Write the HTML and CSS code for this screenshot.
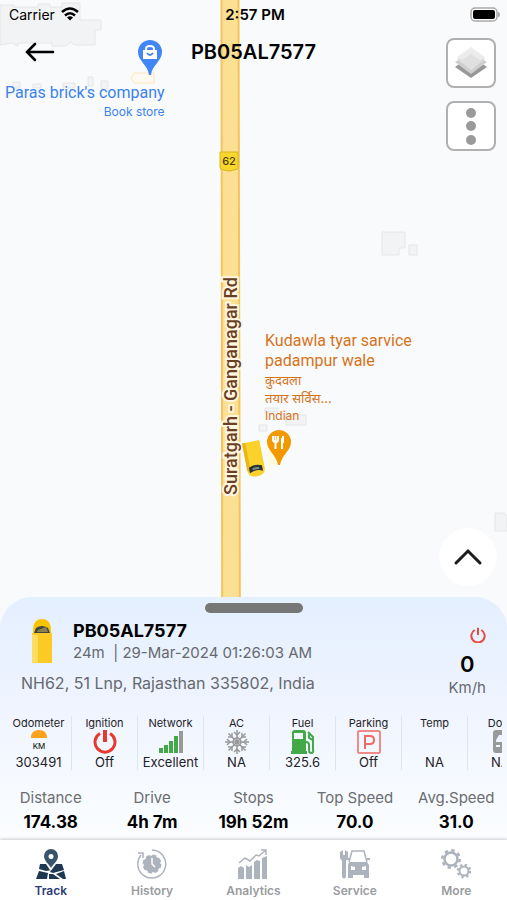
FILE: index.html
```html
<!DOCTYPE html>
<html lang="en">
	<head>
		<meta charset="utf-8">
		<meta name="viewport" content="width=device-width, initial-scale=1">
		<title>PB05AL7577</title>
		<link rel="stylesheet" href="styles.css">
	</head>
	<body>
		<div class="screen">
			<main class="map">
				<svg class="map-canvas" aria-hidden="true">
					<g class="building">
						<path d="M0 5H14V7H38V4H50V7H62V3H80V20H101V30H95V45H75L70 42L66 46H52V43H18V46L12 43L0 45Z"/>
						<path d="M382 232H405V248H399V255H382Z"/>
						<path d="M409 245H417V255H409Z"/>
						<path d="M495 513H504L507 516V531H495Z"/>
						<path d="M259 425H267V431H259Z"/>
						<path d="M286 415H306V425H286Z"/>
						<path d="M265 408H278V412H265Z"/>
						<path d="M13 82H20V88H13ZM33 84H41V88H33ZM63 83H75V88H63ZM88 77H93V86H88ZM101 81H108V89H101Z"/>
					</g>
					<path class="shop" d="M134 73H154V83H135L131 79Z"/>
					<path class="shop-plot" d="M268 450H277V466H268Z"/>
					<path class="road" d="M221.500 -5H238.500L240.500 900H222.500Z"/>
					<g class="shield">
						<path d="M220 152H238V167Q238 170 234 170L229 171L224 170Q220 170 220 167Z"/>
						<text x="229" y="165">62</text>
					</g>
					<text class="road-name" x="-386" y="237" transform="rotate(-90)">Suratgarh - Ganganagar Rd</text>
					<g transform="translate(254 459) rotate(-11) scale(1.1)">
						<path fill="#fbd22b" d="M-8 -16H8V9Q8 16 0 16Q-8 16 -8 9Z"/>
						<path fill="#e9b51a" d="M-8 -16H-5V12L-8 9Z"/>
						<path fill="#29353a" d="M-6 7Q0 4 6 7V12Q0 9 -6 12Z"/>
						<path fill="#7d8a80" d="M-3 8Q0 7 3 8V10Q0 9 -3 10Z"/>
					</g>
				</svg>
				<a class="place place-store" href="#store">
					<svg width="26" height="38" viewBox="0 0 26 38" aria-hidden="true">
						<path fill="#4285f4" d="M13 1A12 12 0 0 1 25 13C25 22 15 26 14 36H12C11 26 1 22 1 13A12 12 0 0 1 13 1Z"/>
						<path fill="#fff" d="M6 11H20V20H6Z"/>
						<path fill="none" stroke="#fff" stroke-width="2" d="M9 12V10Q9 7 13 7Q17 7 17 10V12"/>
						<path fill="none" stroke="#4285f4" stroke-width="2" d="M10 14Q13 18 16 14"/>
					</svg>
					<span class="place-name">Paras brick's company</span>
					<span class="place-kind">Book store</span>
				</a>
				<a class="place place-food" href="#food">
					<span class="place-name">Kudawla tyar sarvice<br>padampur wale</span>
					<span class="place-local" lang="hi">कुदवला<br>तयार सर्विस…</span>
					<span class="place-kind">Indian</span>
					<svg width="28" height="38" viewBox="0 0 28 38" aria-hidden="true">
						<path fill="#f29900" d="M14 1A12 12 0 0 1 26 13C26 22 17 25 15 36H13C11 25 2 22 2 13A12 12 0 0 1 14 1Z"/>
						<path fill="none" stroke="#fff" stroke-width="2" d="M8 7V11Q8 13 11 13Q13 13 13 11V7M10.500 7V20M17 20V9M18 7V14"/>
					</svg>
				</a>
				<div class="status">
					<span class="carrier">Carrier
						<svg width="18" height="14" viewBox="0 0 18 14" aria-hidden="true">
							<path fill="none" stroke="#000" stroke-width="2.600" d="M1 5Q9 -2 17 5M4 8.500Q9 4 14 8.500"/>
							<path d="M6 10.500Q9 8 12 10.500L9 13.500Z"/>
						</svg>
					</span>
					<time>2:57 PM</time>
					<svg width="31" height="15" viewBox="0 0 31 15" aria-hidden="true">
						<rect x="1" y="1" width="26" height="13" rx="4" fill="#fff" stroke="#a9a9a9" stroke-width="1.500"/>
						<rect x="3" y="3" width="22" height="9" rx="2"/>
						<path fill="#a9a9a9" d="M28 5Q30 5 30 7.500Q30 10 28 10Z"/>
					</svg>
				</div>
				<header class="topbar">
					<button class="back" type="button" aria-label="Back">
						<svg width="30" height="20" viewBox="0 0 30 20" fill="none" stroke="#000" stroke-width="2.600" stroke-linecap="round">
							<path d="M28 10H2M10 2L2 10L10 18"/>
						</svg>
					</button>
					<h1>PB05AL7577</h1>
					<div class="tools">
						<button class="tool" type="button" aria-label="Map layers">
							<svg width="34" height="34" viewBox="0 0 34 34">
								<path fill="#989898" d="M1 21L17 10L33 21L17 32Z"/>
								<path fill="#cfcfcf" d="M1 16L17 6L33 16L17 28Z"/>
								<path fill="#e0e0e0" d="M3 13L17 4L31 13L17 24Z"/>
								<path fill="#ececec" d="M3 11L17 1L31 11L26 14L17 8L8 14Z"/>
							</svg>
						</button>
						<button class="tool" type="button" aria-label="Options">
							<svg width="12" height="38" viewBox="0 0 12 38" fill="#9a9a9a">
								<circle cx="6" cy="6" r="5"/><circle cx="6" cy="19" r="5"/><circle cx="6" cy="33" r="5"/>
							</svg>
						</button>
					</div>
				</header>
				<button class="expand" type="button" aria-label="Expand">
					<svg width="30" height="18" viewBox="0 0 30 18" fill="none" stroke="#1c1c1c" stroke-width="3" stroke-linecap="round">
						<path d="M3 15L15 3L27 15"/>
					</svg>
				</button>
			</main>

			<section class="sheet">
				<div class="handle"></div>
				<div class="vehicle">
					<div class="vehicle-info">
						<div class="vehicle-head">
							<svg width="20" height="44" viewBox="0 0 20 44" aria-hidden="true">
								<path fill="#f8c400" d="M1 12Q1 0 10 0Q19 0 19 12Z"/>
								<path fill="#fbcb23" d="M0 16L1 12H19L20 16V44H0Z"/>
								<path fill="#ffdd61" d="M0 16H6V44H0Z"/>
								<path fill="#3f4542" d="M4 9Q10 5 16 9L18 14H2Z"/>
								<path fill="#8a8350" d="M6 11L14 8L16 13H5Z"/>
							</svg>
							<div>
								<h2>PB05AL7577</h2>
								<p class="seen">24m &nbsp;| 29-Mar-2024 01:26:03 AM</p>
							</div>
						</div>
						<p class="address">NH62, 51 Lnp, Rajasthan 335802, India</p>
					</div>
					<div class="speed">
						<svg width="16" height="16" viewBox="0 0 24 24" fill="none" stroke="#e94b40" stroke-width="3" aria-hidden="true">
							<path d="M7 4.500A10 10 0 1 0 17 4.500M12 1V12"/>
						</svg>
						<strong>0</strong>
						<span>Km/h</span>
					</div>
				</div>

				<ul class="sensors">
					<li>
						<span>Odometer</span>
						<svg width="24" height="24" viewBox="0 0 24 24" aria-hidden="true">
							<path fill="#faa21b" d="M4 8Q4 0 12 0Q20 0 20 8Z"/>
							<text class="km" x="12" y="19">KM</text>
						</svg>
						<b>303491</b>
					</li>
					<li>
						<span>Ignition</span>
						<svg width="24" height="24" viewBox="0 0 24 24" fill="none" stroke="#e8392f" stroke-width="3" aria-hidden="true">
							<path d="M7 3.500A10 10 0 1 0 17 3.500"/><path stroke-width="4" d="M12 0V12"/>
						</svg>
						<b>Off</b>
					</li>
					<li>
						<span>Network</span>
						<svg width="26" height="24" viewBox="0 0 26 24" fill="#43a948" aria-hidden="true">
							<path d="M1 18H5V23H1ZM6 15H10V23H6ZM11 11H15V23H11ZM16 6H20V23H16Z"/>
							<path fill="#999" d="M21 1H25V23H21Z"/>
						</svg>
						<b>Excellent</b>
					</li>
					<li>
						<span>AC</span>
						<svg width="24" height="24" viewBox="0 0 24 24" fill="none" stroke="#999" stroke-width="1.500" aria-hidden="true">
							<circle cx="12" cy="12" r="4"/>
							<path d="M12 0V24M0 12H24M3.500 3.500L20.500 20.500M20.500 3.500L3.500 20.500"/>
							<path d="M9 2L12 5L15 2M9 22L12 19L15 22M2 9L5 12L2 15M22 9L19 12L22 15M7 3V7H3M17 3V7H21M7 21V17H3M17 21V17H21"/>
						</svg>
						<b>NA</b>
					</li>
					<li>
						<span>Fuel</span>
						<svg width="24" height="24" viewBox="0 0 24 24" aria-hidden="true">
							<path fill="#43a948" fill-rule="evenodd" d="M1 21V3Q1 0 4 0H12Q15 0 15 3V21H16V24H0V21ZM3 3V9H12V3Z"/>
							<path fill="none" stroke="#43a948" stroke-width="2" d="M15 12Q18 12 18 15V20Q18 23 20 23Q23 23 22 19V7L17 2M18 4V8L22 10"/>
						</svg>
						<b>325.6</b>
					</li>
					<li>
						<span>Parking</span>
						<svg width="24" height="24" viewBox="0 0 24 24" fill="none" stroke="#ef6a60" aria-hidden="true">
							<rect x="1" y="1" width="22" height="22" rx="1" stroke-width="1.500"/>
							<path stroke-width="2" d="M8 19V6H13Q17 6 17 10Q17 14 13 14H8"/>
						</svg>
						<b>Off</b>
					</li>
					<li>
						<span>Temp</span>
						<svg width="24" height="24" aria-hidden="true"></svg>
						<b>NA</b>
					</li>
					<li>
						<span>Door</span>
						<svg width="16" height="24" viewBox="0 0 16 24" aria-hidden="true">
							<rect y="0" width="16" height="23" rx="3" fill="#999"/>
							<path fill="#eef4ff" d="M3 10L6 5H14V12H3ZM3 15H7V17H3Z"/>
						</svg>
						<b>NA</b>
					</li>
				</ul>

				<dl class="stats">
					<div><dt>Distance</dt><dd>174.38</dd></div>
					<div><dt>Drive</dt><dd>4h 7m</dd></div>
					<div><dt>Stops</dt><dd>19h 52m</dd></div>
					<div><dt>Top Speed</dt><dd>70.0</dd></div>
					<div><dt>Avg.Speed</dt><dd>31.0</dd></div>
				</dl>
			</section>

			<nav class="tabs">
				<a class="tab active" href="#track">
					<svg width="30" height="30" viewBox="0 0 30 30" fill="#1d3850" aria-hidden="true">
						<path fill="#38546a" fill-rule="evenodd" d="M15 0A7 7 0 0 1 22 7C22 12 17 15 15 19C13 15 8 12 8 7A7 7 0 0 1 15 0ZM15 5A2 2 0 0 0 15 10A2 2 0 0 0 15 5Z"/>
						<path d="M4 15H10L14 21H16L10 22L3 20ZM3 22L12 24L11 30H0ZM20 15H26L28 21L17 24L14 23ZM13 25L17 25L24 30H13ZM20 25L28 22L30 30H27Z"/>
					</svg>
					Track
				</a>
				<a class="tab" href="#history">
					<svg width="30" height="30" viewBox="0 0 30 30" fill="none" stroke="#adb3bd" aria-hidden="true">
						<path stroke-width="1.500" d="M15 1A14 14 0 1 1 4 6M1 4H6V9"/>
						<circle cx="15" cy="15" r="8" fill="#adb3bd"/>
						<circle cx="15" cy="15" r="8" stroke-width="3" stroke-dasharray="4 2.280"/>
						<path stroke="#fff" stroke-width="1.500" d="M15 9V15L18 18"/>
					</svg>
					History
				</a>
				<a class="tab" href="#analytics">
					<svg width="30" height="30" viewBox="0 0 30 30" fill="#adb3bd" aria-hidden="true">
						<path d="M0 19L3 17L6 19V30H0ZM8 16L11 18L14 16V30H8ZM16 13L19 11L22 12V30H16ZM24 9L29 7V30H24Z"/>
						<path fill="none" stroke="#adb3bd" stroke-width="1.500" d="M1 14L7 9L12 12L18 6L21 7L28 1M23 1H28V6"/>
					</svg>
					Analytics
				</a>
				<a class="tab" href="#service">
					<svg width="30" height="30" viewBox="0 0 30 30" fill="#adb3bd" aria-hidden="true">
						<path d="M0 3L3 1V6H5V1L8 3V9L6 12V28Q4 31 2 28V12L0 9Z"/>
						<path fill="none" stroke="#adb3bd" stroke-width="1.500" d="M9 13L12 2H24L27 13"/>
						<path fill-rule="evenodd" d="M9 13H27L29 16V29H24V26H13V29H8V16ZM11 17V21H15V18ZM26 17V21H22V18Z"/>
						<path d="M7 9H10V11H7ZM27 9H30V11H27Z"/>
					</svg>
					Service
				</a>
				<a class="tab" href="#more">
					<svg width="30" height="30" viewBox="0 0 30 30" fill="none" stroke="#adb3bd" aria-hidden="true">
						<circle cx="10" cy="10" r="6.500" stroke-width="2.500"/>
						<circle cx="10" cy="10" r="8.700" stroke-width="2.600" stroke-dasharray="3.400 3.430"/>
						<circle cx="23" cy="22" r="4.500" stroke-width="2"/>
						<circle cx="23" cy="22" r="6.200" stroke-width="2.200" stroke-dasharray="2.400 2.470"/>
					</svg>
					More
				</a>
			</nav>
		</div>
	</body>
</html>
```
FILE: styles.css
```css
*
{
	box-sizing: border-box;
}
body
{
	margin: 0;
	font-family: Inter, "Noto Sans", sans-serif;
	color: #000;
}
h1, h2, p, ul, dl, dd
{
	margin: 0;
	padding: 0;
}
button
{
	padding: 0;
	border: 0;
	background: none;
	cursor: pointer;
}
svg
{
	display: block;
	flex: none;
}
.screen
{
	display: flex;
	flex-direction: column;
	min-height: 100vh;
}

/* map */
.map
{
	position: relative;
	display: flex;
	flex: 1;
	flex-direction: column;
	min-height: 500px;
	margin-bottom: -32px;
	padding-bottom: 43px;
	background-color: #f9fafc;
	overflow: hidden;
}
.map-canvas
{
	position: absolute;
	inset: 0;
	width: 100%;
	height: 100%;
}
.building
{
	fill: #f2f3f4;
	stroke: #e4e6e8;
}
.shop
{
	fill: #fffaf0;
	stroke: #fbe6bb;
}
.shop-plot
{
	fill: #fffbe0;
}
.road
{
	fill: #fbe094;
	stroke: #f6c35a;
	stroke-width: 2px;
}
.shield path
{
	fill: #f9d62c;
	stroke: #d9b51c;
}
.shield text
{
	font-size: 11px;
	font-weight: 500;
	fill: #4c3d07;
	text-anchor: middle;
}
.road-name
{
	font-family: Roboto, sans-serif;
	font-size: 18px;
	font-weight: 500;
	fill: #6a3f24;
	stroke: #fff6e0;
	stroke-width: 4px;
	paint-order: stroke;
	text-anchor: middle;
}
.place
{
	position: absolute;
	display: flex;
	flex-direction: column;
	text-decoration: none;
}
.place-name
{
	font-family: Roboto, sans-serif;
	font-size: 16px;
	line-height: 20px;
}
.place-kind
{
	font-size: 12px;
	line-height: 18px;
}
.place-store
{
	top: 39px;
	left: 5px;
	align-items: flex-end;
	color: #3b82ee;
}
.place-store svg
{
	margin: 0 2px 6px 0;
}
.place-food
{
	top: 331px;
	left: 265px;
	align-items: flex-start;
	color: #d5731a;
}
.place-food svg
{
	margin-top: 4px;
}
.place-local
{
	font-size: 13px;
	line-height: 18px;
}

/* status and top bar */
.status
{
	position: relative;
	display: grid;
	grid-template-columns: 1fr auto 1fr;
	align-items: center;
	height: 28px;
	padding: 0 6px 0 9px;
	font-size: 14px;
}
.status time
{
	font-size: 15px;
	font-weight: 600;
}
.status > svg
{
	justify-self: end;
}
.carrier
{
	display: flex;
	align-items: center;
	gap: 6px;
}
.topbar
{
	position: relative;
	display: grid;
	grid-template-columns: 1fr auto 1fr;
	align-items: start;
	padding: 10px 11px 0;
}
.back
{
	justify-self: start;
	padding: 4px 14px;
}
.topbar h1
{
	font-size: 20px;
	font-weight: 600;
	line-height: 28px;
}
.tools
{
	display: flex;
	flex-direction: column;
	justify-self: end;
	gap: 13px;
}
.tool
{
	display: flex;
	align-items: center;
	justify-content: center;
	width: 50px;
	height: 50px;
	border: 2px solid #b0b0b3;
	border-radius: 8px;
	background-color: #fff;
}
.expand
{
	position: relative;
	display: flex;
	align-items: center;
	justify-content: center;
	align-self: flex-end;
	width: 58px;
	height: 58px;
	margin: auto 10px 0 0;
	border-radius: 50%;
	background-color: #fff;
}

/* vehicle sheet */
.sheet
{
	position: relative;
	padding-top: 6px;
	border-radius: 32px 32px 0 0;
	background: linear-gradient(#e4efff, #f0f5ff 50%, #fbfdff);
}
.handle
{
	width: 98px;
	height: 10px;
	margin: 0 auto;
	border-radius: 5px;
	background-color: #787777;
}
.vehicle
{
	display: flex;
	justify-content: space-between;
	padding: 6px 21px 0;
}
.vehicle-head
{
	display: flex;
	gap: 21px;
	padding-left: 11px;
}
.vehicle h2
{
	font-size: 18px;
	font-weight: 700;
	line-height: 24px;
}
.seen
{
	font-size: 15px;
	line-height: 20px;
	color: #66696e;
}
.address
{
	margin-top: 10px;
	font-size: 16px;
	line-height: 20px;
	color: #66696e;
}
.speed
{
	display: flex;
	flex-direction: column;
	align-items: center;
	padding-top: 8px;
	font-size: 15px;
	line-height: 20px;
	color: #66696e;
}
.speed svg
{
	align-self: flex-end;
}
.speed strong
{
	margin-top: 7px;
	font-size: 22px;
	font-weight: 600;
	line-height: 28px;
	color: #000;
}
.sensors
{
	display: flex;
	margin: 18px 5px 0 6px;
	list-style: none;
	overflow: hidden;
}
.sensors li
{
	display: flex;
	flex: none;
	flex-direction: column;
	align-items: center;
	width: 66px;
	height: 54px;
	border-right: 1px solid #dfe5ee;
	color: #1f2226;
}
.sensors span
{
	font-size: 11px;
	line-height: 14px;
}
.sensors b
{
	font-size: 13px;
	font-weight: 400;
	line-height: 16px;
}
.km
{
	font-size: 8px;
	text-anchor: middle;
}
.stats
{
	display: grid;
	grid-template-columns: repeat(5, 1fr);
	padding: 16px 0 6px;
	text-align: center;
}
.stats dt
{
	font-size: 15px;
	line-height: 24px;
	color: #6b6d70;
}
.stats dd
{
	font-size: 17px;
	font-weight: 700;
	line-height: 24px;
}

/* bottom tabs */
.tabs
{
	position: relative;
	display: grid;
	grid-template-columns: repeat(5, 1fr);
	height: 60px;
	padding-top: 9px;
	background-color: #fff;
	box-shadow: 0 -1px 3px rgba(0, 0, 0, 0.2);
}
.tab
{
	display: flex;
	flex-direction: column;
	align-items: center;
	gap: 4px;
	font-size: 12px;
	font-weight: 600;
	line-height: 16px;
	color: #999ca1;
	text-decoration: none;
}
.tab.active
{
	color: #2a3b78;
}
```
